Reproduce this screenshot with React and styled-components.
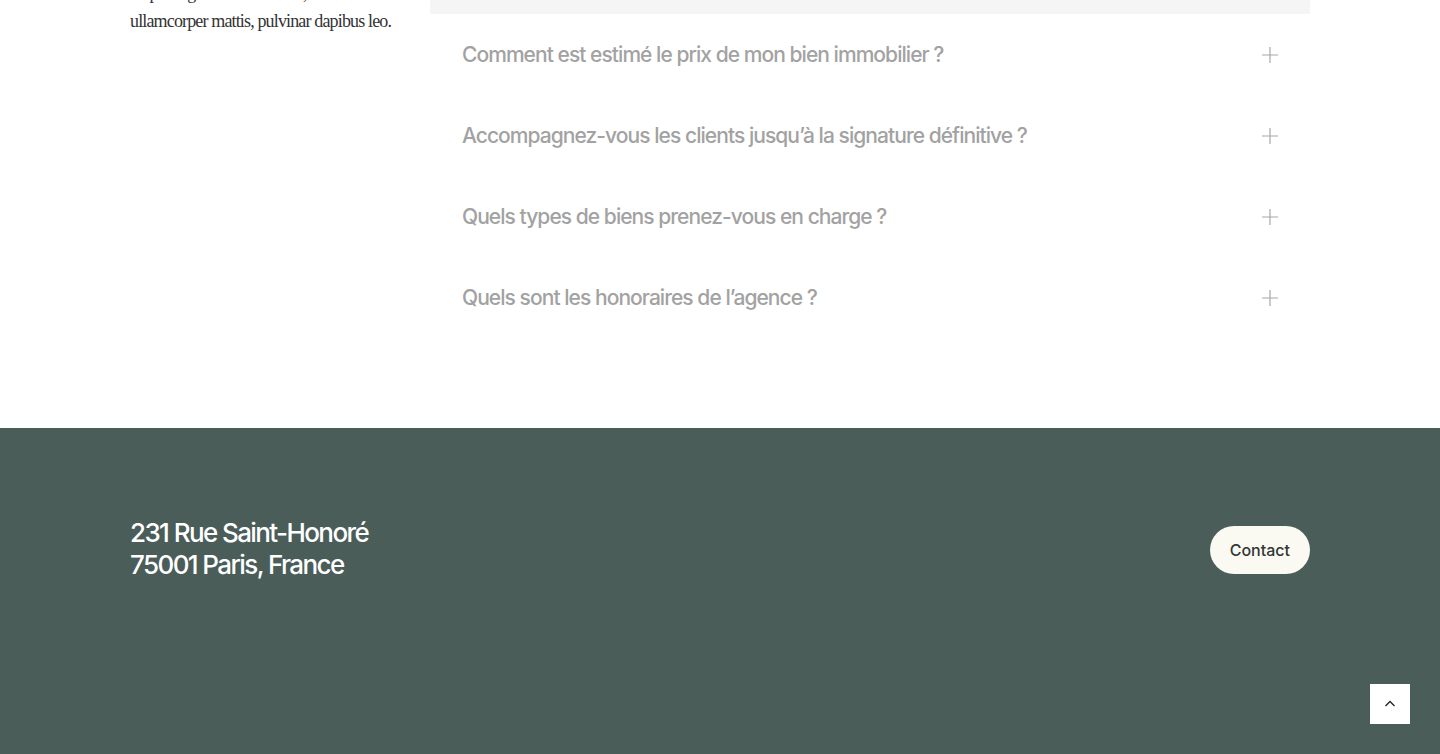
import styled, { createGlobalStyle } from "styled-components";

const GlobalStyle = createGlobalStyle`
  * { box-sizing: border-box; }
  body {
    margin: 0;
    background: #ffffff;
    font-family: "Inter", "Liberation Sans", sans-serif;
    overflow: hidden;
  }
`;

const Page = styled.div`
  min-height: 100vh;
  display: flex;
  flex-direction: column;
`;

const Section = styled.section`
  width: 1180px;
  margin: 0 auto;
  display: grid;
  grid-template-columns: 300px 880px;
  padding-bottom: 90px;
`;

const Intro = styled.p`
  margin: -21px 0 0;
  font-family: "Liberation Serif", "Times New Roman", serif;
  font-size: 18px;
  line-height: 28px;
  letter-spacing: -0.85px;
  color: #333333;
`;

const Line = styled.span`
  display: block;
  white-space: nowrap;
`;

const Faq = styled.div`
  display: flex;
  flex-direction: column;
  position: relative;
  background: #ffffff;
`;

const OpenTail = styled.div`
  height: 14px;
  background: #f5f5f5;
`;

const Row = styled.button`
  height: 81px;
  padding: 0 32px;
  border: 0;
  background: transparent;
  display: flex;
  align-items: center;
  justify-content: space-between;
  cursor: pointer;
  text-align: left;
`;

const Question = styled.span`
  font-family: "Inter", "Liberation Sans", sans-serif;
  font-size: 21px;
  font-weight: 500;
  letter-spacing: -0.95px;
  color: #a2a2a2;
`;

const Footer = styled.footer`
  flex: 1;
  background: #4a5d59;
  padding: 89px 130px 120px;
  display: flex;
  justify-content: space-between;
  align-items: flex-start;
  min-height: 326px;
`;

const Address = styled.address`
  font-style: normal;
  font-size: 26px;
  line-height: 32px;
  font-weight: 500;
  letter-spacing: -1.6px;
  color: #ffffff;
`;

const ContactButton = styled.a`
  margin-top: 9px;
  height: 48px;
  padding: 0 20px;
  border-radius: 24px;
  background: #fafaf3;
  color: #333634;
  font-size: 16px;
  font-weight: 500;
  display: flex;
  align-items: center;
  text-decoration: none;
`;

const ScrollTop = styled.button`
  position: fixed;
  right: 30px;
  bottom: 30px;
  width: 40px;
  height: 40px;
  border: 0;
  padding: 0;
  background: #ffffff;
  display: flex;
  align-items: center;
  justify-content: center;
  cursor: pointer;
`;

const questions = [
  "Comment est estimé le prix de mon bien immobilier ?",
  "Accompagnez-vous les clients jusqu’à la signature définitive ?",
  "Quels types de biens prenez-vous en charge ?",
  "Quels sont les honoraires de l’agence ?",
];

function Plus() {
  return (
    <svg width="16" height="16" viewBox="0 0 16 16" fill="none">
      <path d="M8 0v16M0 8h16" stroke="#a8a8a8" strokeWidth="1.2" />
    </svg>
  );
}

export default function App() {
  return (
    <Page>
      <GlobalStyle />
      <Section>
        <Intro>
          <Line>adipiscing elit. Ut elit tellus, luctus</Line>
          <Line>ullamcorper mattis, pulvinar dapibus leo.</Line>
        </Intro>
        <Faq>
          <OpenTail />
          {questions.map((q) => (
            <Row key={q}>
              <Question>{q}</Question>
              <Plus />
            </Row>
          ))}
        </Faq>
      </Section>
      <Footer>
        <Address>
          231 Rue Saint-Honoré
          <br />
          75001 Paris, France
        </Address>
        <ContactButton href="#">Contact</ContactButton>
      </Footer>
      <ScrollTop aria-label="Haut de page">
        <svg width="12" height="12" viewBox="0 0 12 12" fill="none">
          <path d="M1.5 8L6 3.5L10.5 8" stroke="#222" strokeWidth="1.3" />
        </svg>
      </ScrollTop>
    </Page>
  );
}
